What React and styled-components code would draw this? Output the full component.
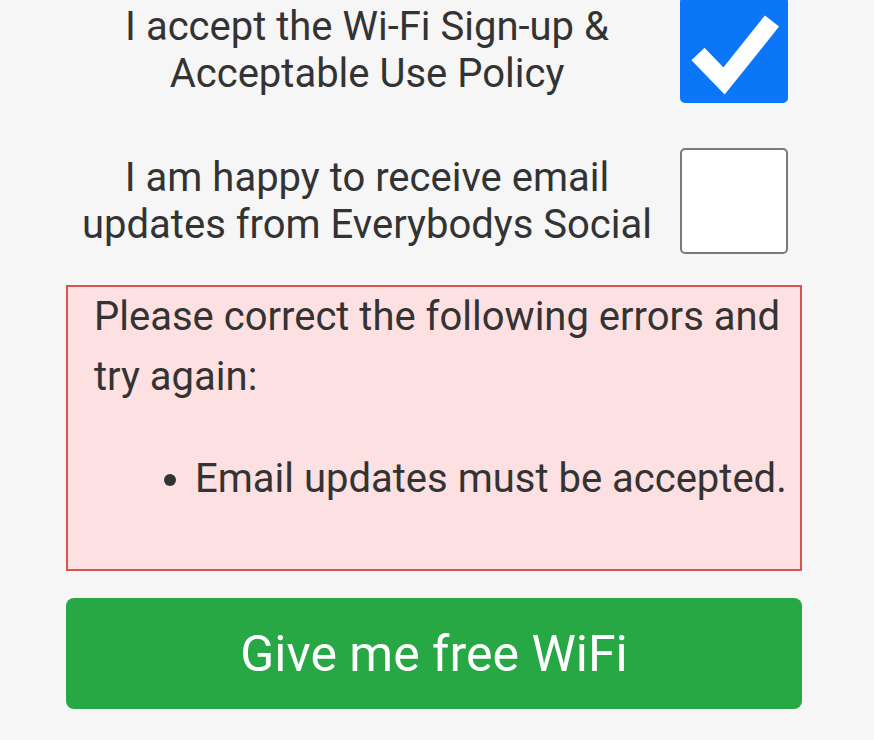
import React from "react";
import styled, { createGlobalStyle } from "styled-components";

const GlobalStyle = createGlobalStyle`
  html, body {
    margin: 0;
    padding: 0;
    background: #f6f6f6;
  }
  body {
    font-family: Roboto, "Liberation Sans", sans-serif;
    color: #333;
  }
`;

const Page = styled.div`
  width: 736px;
  margin: -3px 0 0 66px;
  display: flex;
  flex-direction: column;
`;

const Row = styled.label`
  display: grid;
  grid-template-columns: 1fr 108px;
  column-gap: 12px;
  align-items: center;
  padding-right: 14px;
  margin-bottom: ${(p) => p.$gap || 0}px;
  cursor: pointer;
`;

const Label = styled.span`
  font-size: 40px;
  line-height: 47px;
  text-align: center;
  color: #333;
  white-space: nowrap;
`;

const Box = styled.span`
  box-sizing: border-box;
  width: 108px;
  height: 106px;
  border-radius: 5px;
  display: flex;
  align-items: center;
  justify-content: center;
  background: ${(p) => (p.$checked ? "#0b76f7" : "#fff")};
  border: ${(p) => (p.$checked ? "none" : "2px solid #7a7a7a")};
`;

const ErrorBox = styled.div`
  box-sizing: border-box;
  height: 286px;
  border: 2px solid #d9534f;
  background: #fde0e1;
  padding: 0 8px 0 26px;
  margin-bottom: 27px;
`;

const ErrorText = styled.p`
  margin: 0;
  font-size: 40px;
  line-height: 60px;
  color: #333;
`;

const ErrorList = styled.ul`
  margin: 42px 0 0;
  padding-left: 101px;
  font-size: 40px;
  line-height: 60px;
  color: #333;
`;

const SubmitButton = styled.button`
  height: 111px;
  border: none;
  border-radius: 8px;
  background: #28a745;
  color: #fff;
  font-family: Roboto, "Liberation Sans", sans-serif;
  font-size: 50px;
  cursor: pointer;
`;

const Check = () => (
  <svg width="108" height="106" viewBox="0 0 108 106">
    <polyline
      points="18,57 44,84 92,24"
      fill="none"
      stroke="#fff"
      strokeWidth="18"
      strokeLinejoin="miter"
    />
  </svg>
);

const App = () => {
  return (
    <>
      <GlobalStyle />
      <Page>
        <Row $gap={45}>
          <Label>
            I accept the Wi-Fi Sign-up &amp;
            <br />
            Acceptable Use Policy
          </Label>
          <Box $checked>
            <Check />
          </Box>
        </Row>
        <Row $gap={31}>
          <Label>
            I am happy to receive email
            <br />
            updates from Everybodys Social
          </Label>
          <Box />
        </Row>
        <ErrorBox>
          <ErrorText>Please correct the following errors and try again:</ErrorText>
          <ErrorList>
            <li>Email updates must be accepted.</li>
          </ErrorList>
        </ErrorBox>
        <SubmitButton>Give me free WiFi</SubmitButton>
      </Page>
    </>
  );
};

export default App;
